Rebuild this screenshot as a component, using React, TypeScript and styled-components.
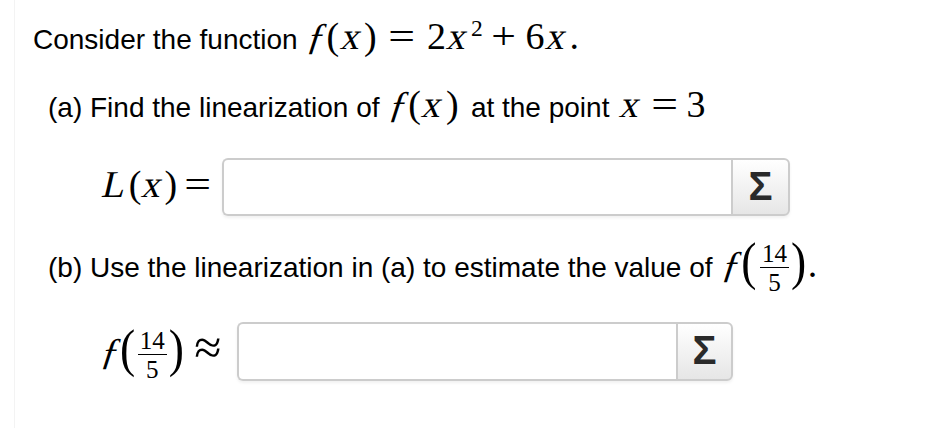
import React from 'react';
import styled, { createGlobalStyle } from 'styled-components';

const GlobalStyle = createGlobalStyle`
  html, body {
    margin: 0;
    background: #fff;
  }
  body {
    font-family: "Liberation Sans", Arial, sans-serif;
    color: #000;
  }
`;

const serif = `"Liberation Serif", "Times New Roman", serif`;

const Page = styled.div`
  width: 946px;
  height: 440px;
  overflow: hidden;
  padding-left: 14px;
  box-sizing: border-box;
`;

const Frame = styled.div`
  height: 428px;
  border-left: 1px solid #f3f3f3;
  padding: 22px 0 0 18px;
  box-sizing: border-box;
`;

const Line = styled.p<{ $indent?: number; $top?: number }>`
  margin: ${(p) => p.$top ?? 0}px 0 0 ${(p) => p.$indent ?? 0}px;
  height: 36px;
  font-size: 28px;
  line-height: 36px;
  white-space: nowrap;
`;

const Math = styled.span`
  font-family: ${serif};
  font-size: 38px;
  line-height: 0;
  letter-spacing: 1.5px;
  margin: 0 3px;
`;

const V = styled.span`
  display: inline-block;
  transform: skewX(-13deg);
  padding: 0 1.5px;
`;

/* the hooked f stands in for the math-italic f */
const F = styled.span`
  display: inline-block;
  transform: skewX(-10deg);
  letter-spacing: 0;
  margin-right: -1px;
`;

const Op = styled.span<{ $space?: number; $scale?: number; $stretch?: number }>`
  display: inline-block;
  margin: 0 ${(p) => p.$space ?? 0.26}em;
  font-size: ${(p) => p.$scale ?? 1}em;
  transform: scaleX(${(p) => p.$stretch ?? 1});
`;

const Sup = styled.sup`
  font-size: 0.62em;
  vertical-align: 0.55em;
  line-height: 0;
`;

const Paren = styled.span`
  display: inline-block;
  font-size: 1.2em;
  transform: scaleY(1.15);
`;

const Frac = styled.span`
  display: inline-flex;
  flex-direction: column;
  align-items: center;
  font-family: ${serif};
  font-size: 0.66em;
  line-height: 1;
  vertical-align: 0.6em;
  letter-spacing: 0;
  margin: -16px 2px -16px;
`;

const Num = styled.span`
  padding: 0 2px 1px;
  border-bottom: 1.5px solid #000;
`;

const Den = styled.span`
  padding-top: 2px;
`;

const AnswerRow = styled.div<{ $top: number; $height: number }>`
  display: flex;
  align-items: flex-start;
  margin-top: ${(p) => p.$top}px;
  padding-left: 69px;
  height: ${(p) => p.$height}px;
`;

const Label = styled.div<{ $width: number }>`
  width: ${(p) => p.$width}px;
  white-space: nowrap;
  font-family: ${serif};
  font-size: 38px;
  line-height: 52px;
  letter-spacing: 0.5px;
`;

const Field = styled.div`
  display: flex;
  height: 100%;
  border-radius: 6px;
  box-shadow: 0 2px 3px rgba(0, 0, 0, 0.06);
`;

const Input = styled.input<{ $width: number }>`
  width: ${(p) => p.$width}px;
  height: 100%;
  box-sizing: border-box;
  border: 2px solid #cccccc;
  border-right: none;
  border-radius: 6px 0 0 6px;
  background: #fff;
  outline: none;
  padding: 0 10px;
  font-size: 24px;
`;

const SigmaButton = styled.button<{ $width: number }>`
  width: ${(p) => p.$width}px;
  height: 100%;
  box-sizing: border-box;
  border: 2px solid #cccccc;
  border-radius: 0 6px 6px 0;
  background: linear-gradient(#ffffff, #e6e6e6);
  font-family: "Liberation Sans", Arial, sans-serif;
  font-weight: bold;
  font-size: 40px;
  color: #2a2a2a;
  line-height: 1;
  padding: 0 0 3px;
  display: flex;
  align-items: center;
  justify-content: center;
`;

function FourteenFifths() {
  return (
    <>
      <Paren>(</Paren>
      <Frac>
        <Num>14</Num>
        <Den>5</Den>
      </Frac>
      <Paren>)</Paren>
    </>
  );
}

export default function App() {
  return (
    <Page>
      <GlobalStyle />
      <Frame>
        <Line>
          Consider the function{' '}
          <Math>
            <F>ƒ</F>(<V>x</V>)<Op $space={0.34} $stretch={1.25}>=</Op>2<V>x</V>
            <Sup>2</Sup>
            <Op $space={0.24} $stretch={1.15}>+</Op>6<V>x</V>.
          </Math>
        </Line>

        <Line $indent={15} $top={32}>
          (a) Find the linearization of{' '}
          <Math>
            <F>ƒ</F>(<V>x</V>)
          </Math>{' '}
          at the point{' '}
          <Math>
            <V>x</V>
            <Op $space={0.26} $stretch={1.25}>=</Op>3
          </Math>
        </Line>

        <AnswerRow $top={32} $height={58}>
          <Label $width={120}>
            <V>L</V>(<V>x</V>)<Op $space={0.24} $stretch={1.25}>=</Op>
          </Label>
          <Field>
            <Input $width={509} aria-label="L(x)" />
            <SigmaButton $width={59}>Σ</SigmaButton>
          </Field>
        </AnswerRow>

        <Line $indent={15} $top={34}>
          (b) Use the linearization in (a) to estimate the value of{' '}
          <Math>
            <F>ƒ</F>
            <FourteenFifths />.
          </Math>
        </Line>

        <AnswerRow $top={36} $height={59}>
          <Label $width={135}>
            <F>ƒ</F>
            <FourteenFifths />
            <Op $space={0.2} $scale={1.3}>≈</Op>
          </Label>
          <Field>
            <Input $width={439} aria-label="f(14/5)" />
            <SigmaButton $width={57}>Σ</SigmaButton>
          </Field>
        </AnswerRow>
      </Frame>
    </Page>
  );
}
